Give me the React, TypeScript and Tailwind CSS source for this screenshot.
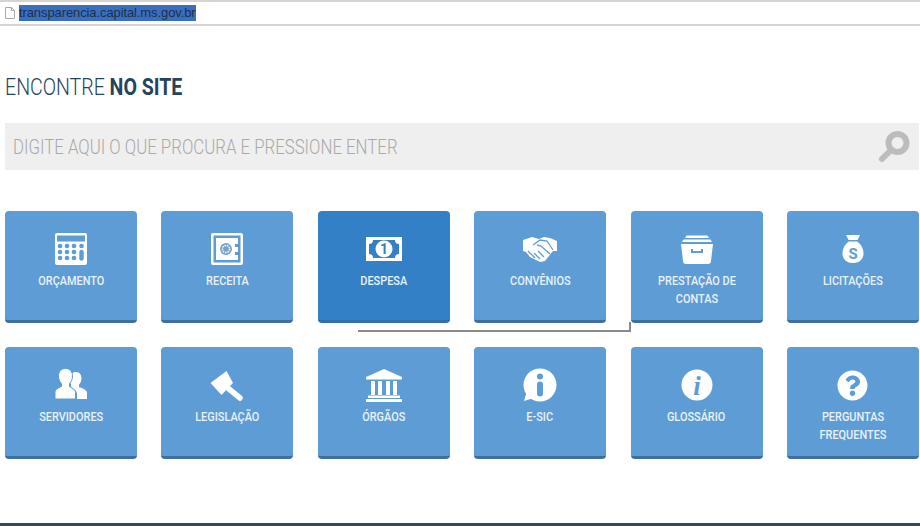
import { ReactNode } from "react";
import { FaQuestionCircle } from "react-icons/fa";

const BLUE = "#5d9cd4";

const Calculator = () => (
  <svg viewBox="0 0 40 40" className="h-10 w-10">
    <rect x="4" y="4" width="32" height="32" rx="2" fill="#fff" />
    <rect x="6" y="6.5" width="28" height="6" fill={BLUE} />
    {[17, 23, 29].map((y) =>
      [9, 16, 23].map((x) => <circle key={`${x}-${y}`} cx={x} cy={y} r="2.3" fill={BLUE} />),
    )}
    <circle cx="30.5" cy="17" r="2.3" fill={BLUE} />
    <rect x="28.3" y="20.8" width="4.4" height="11" rx="2.2" fill={BLUE} />
  </svg>
);

const Safe = () => (
  <svg viewBox="0 0 40 40" className="h-10 w-10">
    <rect x="4" y="4" width="32" height="32" rx="2" fill="#fff" />
    <rect x="6.5" y="6.5" width="27" height="27" fill={BLUE} />
    <path d="M9 9h22v6h-3v3h3v5h-3v3h3v5H9z" fill="#fff" />
    <circle cx="19" cy="20" r="6" fill="#7ba4c6" />
    <circle cx="19" cy="20" r="3.600" fill="none" stroke="#fff" strokeWidth="1.500" strokeDasharray="1.500 1" />
  </svg>
);

const Money = () => (
  <svg viewBox="0 0 40 40" className="h-10 w-10">
    <rect x="2" y="8" width="36" height="24" fill="#fff" />
    <path d="M9 11h22a4 4 0 0 0 4 4v10a4 4 0 0 0-4 4H9a4 4 0 0 0-4-4V15a4 4 0 0 0 4-4z" fill="#3480c6" />
    <circle cx="20" cy="20" r="8.500" fill="#fff" />
    <text x="20" y="25" textAnchor="middle" fontSize="14" fontWeight="700" fill="#3480c6" fontFamily="Roboto, sans-serif">
      1
    </text>
  </svg>
);

const Handshake = () => (
  <svg viewBox="0 0 40 40" className="h-10 w-10">
    <path d="M3 11l9-3 7 2 5-2 6 1 7 3v10h-4l-8 10-5 1-10-5-4-5-3-1z" fill="#fff" />
    <path
      d="M13 16l7-5 7 1 6 9M17 16l4 1 9 8M14 24l6 6M18 22l6 6M8 22l7 7"
      fill="none"
      stroke={BLUE}
      strokeWidth="1.300"
    />
  </svg>
);

const Drawer = () => (
  <svg viewBox="0 0 40 40" className="h-10 w-10">
    <path d="M9.500 6.500h21l1.500 2.500H8z" fill="#fff" />
    <path d="M6.500 10.500h27l1.500 2.500H5z" fill="#fff" />
    <path d="M4 15h32l-2 17a3 3 0 0 1-3 3H9a3 3 0 0 1-3-3z" fill="#fff" />
    <path d="M15 20v3h10v-3" fill="none" stroke={BLUE} strokeWidth="2" />
  </svg>
);

const MoneyBag = () => (
  <svg viewBox="0 0 40 40" className="h-10 w-10">
    <path d="M13 6h14l-2.500 5h-9z" fill="#fff" />
    <path d="M16 12.500h8c4 2.500 6.500 7 6.500 12 0 6-4.500 9.500-10.500 9.500s-10.500-3.500-10.500-9.500c0-5 2.500-9.500 6.500-12z" fill="#fff" />
    <text x="20" y="30" textAnchor="middle" fontSize="15" fontWeight="700" fill={BLUE} fontFamily="Roboto, sans-serif">
      S
    </text>
  </svg>
);

const People = () => (
  <svg viewBox="0 0 40 40" className="h-10 w-10">
    <path
      d="M25 7c3.500 0 5.500 2.800 5.500 6.500 0 2.500-1 4.800-2.500 6v2.500c3 1.400 8 2.500 8 6V34H26v-5c0-3-3-5-6-6.500V19c-1.500-1.500-1.500-4-1.500-6 0-3.500 2.800-6 6.500-6z"
      fill="#fff"
    />
    <path
      d="M14.500 3.500c4.300 0 7 3 7 7.500 0 3-1.200 6-3 7.500v3.200c3.500 1.600 6 3 6 6.300V34H4v-6.500c0-3.300 3.500-4.700 6.500-6v-3C8.700 17 7.500 14 7.500 11c0-4.500 2.700-7.500 7-7.500z"
      fill="#fff"
      stroke={BLUE}
      strokeWidth="1"
    />
  </svg>
);

const Gavel = () => (
  <svg viewBox="0 0 40 40" className="h-10 w-10">
    <path d="M19.500 6l6.500 12-11.500 12-11-12z" fill="#fff" />
    <path d="M22 24l11 9" stroke="#fff" strokeWidth="5.500" strokeLinecap="round" />
  </svg>
);

const Bank = () => (
  <svg viewBox="0 0 40 40" className="h-10 w-10">
    <path d="M20 4l18 8v2.500H2V12z" fill="#fff" />
    {[7, 14, 22, 29].map((x) => (
      <rect key={x} x={x} y="16" width="4" height="14" fill="#fff" />
    ))}
    <rect x="4" y="30.500" width="32" height="2.500" fill="#fff" />
    <rect x="2" y="34" width="36" height="3" fill="#fff" />
  </svg>
);

const InfoBubble = () => (
  <svg viewBox="0 0 40 40" className="h-10 w-10">
    <circle cx="20" cy="20" r="16.500" fill="#fff" />
    <path d="M4 36l3-10 7 7z" fill="#fff" />
    <circle cx="20" cy="11.500" r="3" fill={BLUE} />
    <rect x="17" y="16.500" width="6" height="15" rx="3" fill={BLUE} />
  </svg>
);

const InfoItalic = () => (
  <svg viewBox="0 0 40 40" className="h-10 w-10">
    <circle cx="20" cy="20" r="15.500" fill="#fff" />
    <text
      x="20"
      y="30"
      textAnchor="middle"
      fontSize="27"
      fontWeight="700"
      fontStyle="italic"
      fill={BLUE}
      fontFamily="'Liberation Serif', serif"
    >
      i
    </text>
  </svg>
);

const Question = () => (
  <div className="flex h-10 w-10 items-center justify-center">
    <FaQuestionCircle className="h-[31px] w-[31px] text-white" />
  </div>
);

const items = [
  { label: "Orçamento", icon: <Calculator /> },
  { label: "Receita", icon: <Safe /> },
  { label: "Despesa", icon: <Money />, active: true },
  { label: "Convênios", icon: <Handshake /> },
  { label: "Prestação de contas", icon: <Drawer /> },
  { label: "Licitações", icon: <MoneyBag /> },
  { label: "Servidores", icon: <People /> },
  { label: "Legislação", icon: <Gavel /> },
  { label: "Órgãos", icon: <Bank /> },
  { label: "E-SIC", icon: <InfoBubble /> },
  { label: "Glossário", icon: <InfoItalic /> },
  { label: "Perguntas frequentes", icon: <Question /> },
];

const Card = ({ label, icon, active }: { label: string; icon: ReactNode; active?: boolean }) => (
  <a
    className={`flex h-[112px] flex-col items-center rounded-[4px] border-b-[3px] px-2 pt-[18px] ${
      active ? "border-[#2f6faa] bg-[#3480c6]" : "border-[#3e6f9f] bg-[#5d9cd4]"
    }`}
  >
    {icon}
    <span className="mt-[3px] scale-x-[0.91] text-center text-[12px] leading-[18px] font-medium text-[#e8f1f9] uppercase">
      {label}
    </span>
  </a>
);

export default function App() {
  return (
    <div className="relative flex h-[526px] w-[920px] flex-col overflow-hidden bg-white font-['Roboto',sans-serif]">
      <header className="flex h-[26px] items-center gap-[4px] border-t-2 border-b-2 border-[#d4d4d4] pl-[5px] font-['Liberation_Sans',sans-serif]">
        <svg viewBox="0 0 10 12" className="h-[12px] w-[10px]" fill="none" stroke="#a8a8a8">
          <path d="M.5.500h6l3 3v8h-9zM6.500.500v3h3" />
        </svg>
        <span className="bg-[#3b6fbe] text-[13px] leading-[16px] tracking-[-0.1px] text-[#1d2f4a]">
          transparencia.capital.ms.gov.br
        </span>
      </header>

      <main className="flex flex-1 flex-col px-[5px]">
        <h1 className="mt-[47px] origin-left scale-x-[0.815] text-[24px] leading-[28px] font-light text-[#24445c]">
          ENCONTRE <strong className="font-bold">NO SITE</strong>
        </h1>
        <div className="mt-[22px] flex h-[47px] w-[914px] items-center justify-between bg-[#efefef] pr-[8px] pl-[8px]">
          <span className="origin-left scale-x-[0.84] text-[20px] font-light text-[#a9a9a9]">
            DIGITE AQUI O QUE PROCURA E PRESSIONE ENTER
          </span>
          <svg viewBox="0 0 34 34" className="h-[34px] w-[34px]" fill="none" stroke="#bcbcbc">
            <circle cx="20.500" cy="13" r="9" strokeWidth="6" />
            <path d="M13 21L5 29" strokeWidth="6" strokeLinecap="round" />
          </svg>
        </div>
        <div className="mt-[41px] grid grid-cols-[repeat(6,132px)] gap-x-[24.4px] gap-y-[24px]">
          {items.map((item) => (
            <Card key={item.label} {...item} />
          ))}
        </div>
      </main>

      <div className="h-[3px] bg-[#2f4a5f]" />

      {/* linha de marcação por cima da tela */}
      <div className="absolute top-[322px] left-[358px] h-[10px] w-[273px] border-r-2 border-b-2 border-[#8a8a8a]" />
    </div>
  );
}
